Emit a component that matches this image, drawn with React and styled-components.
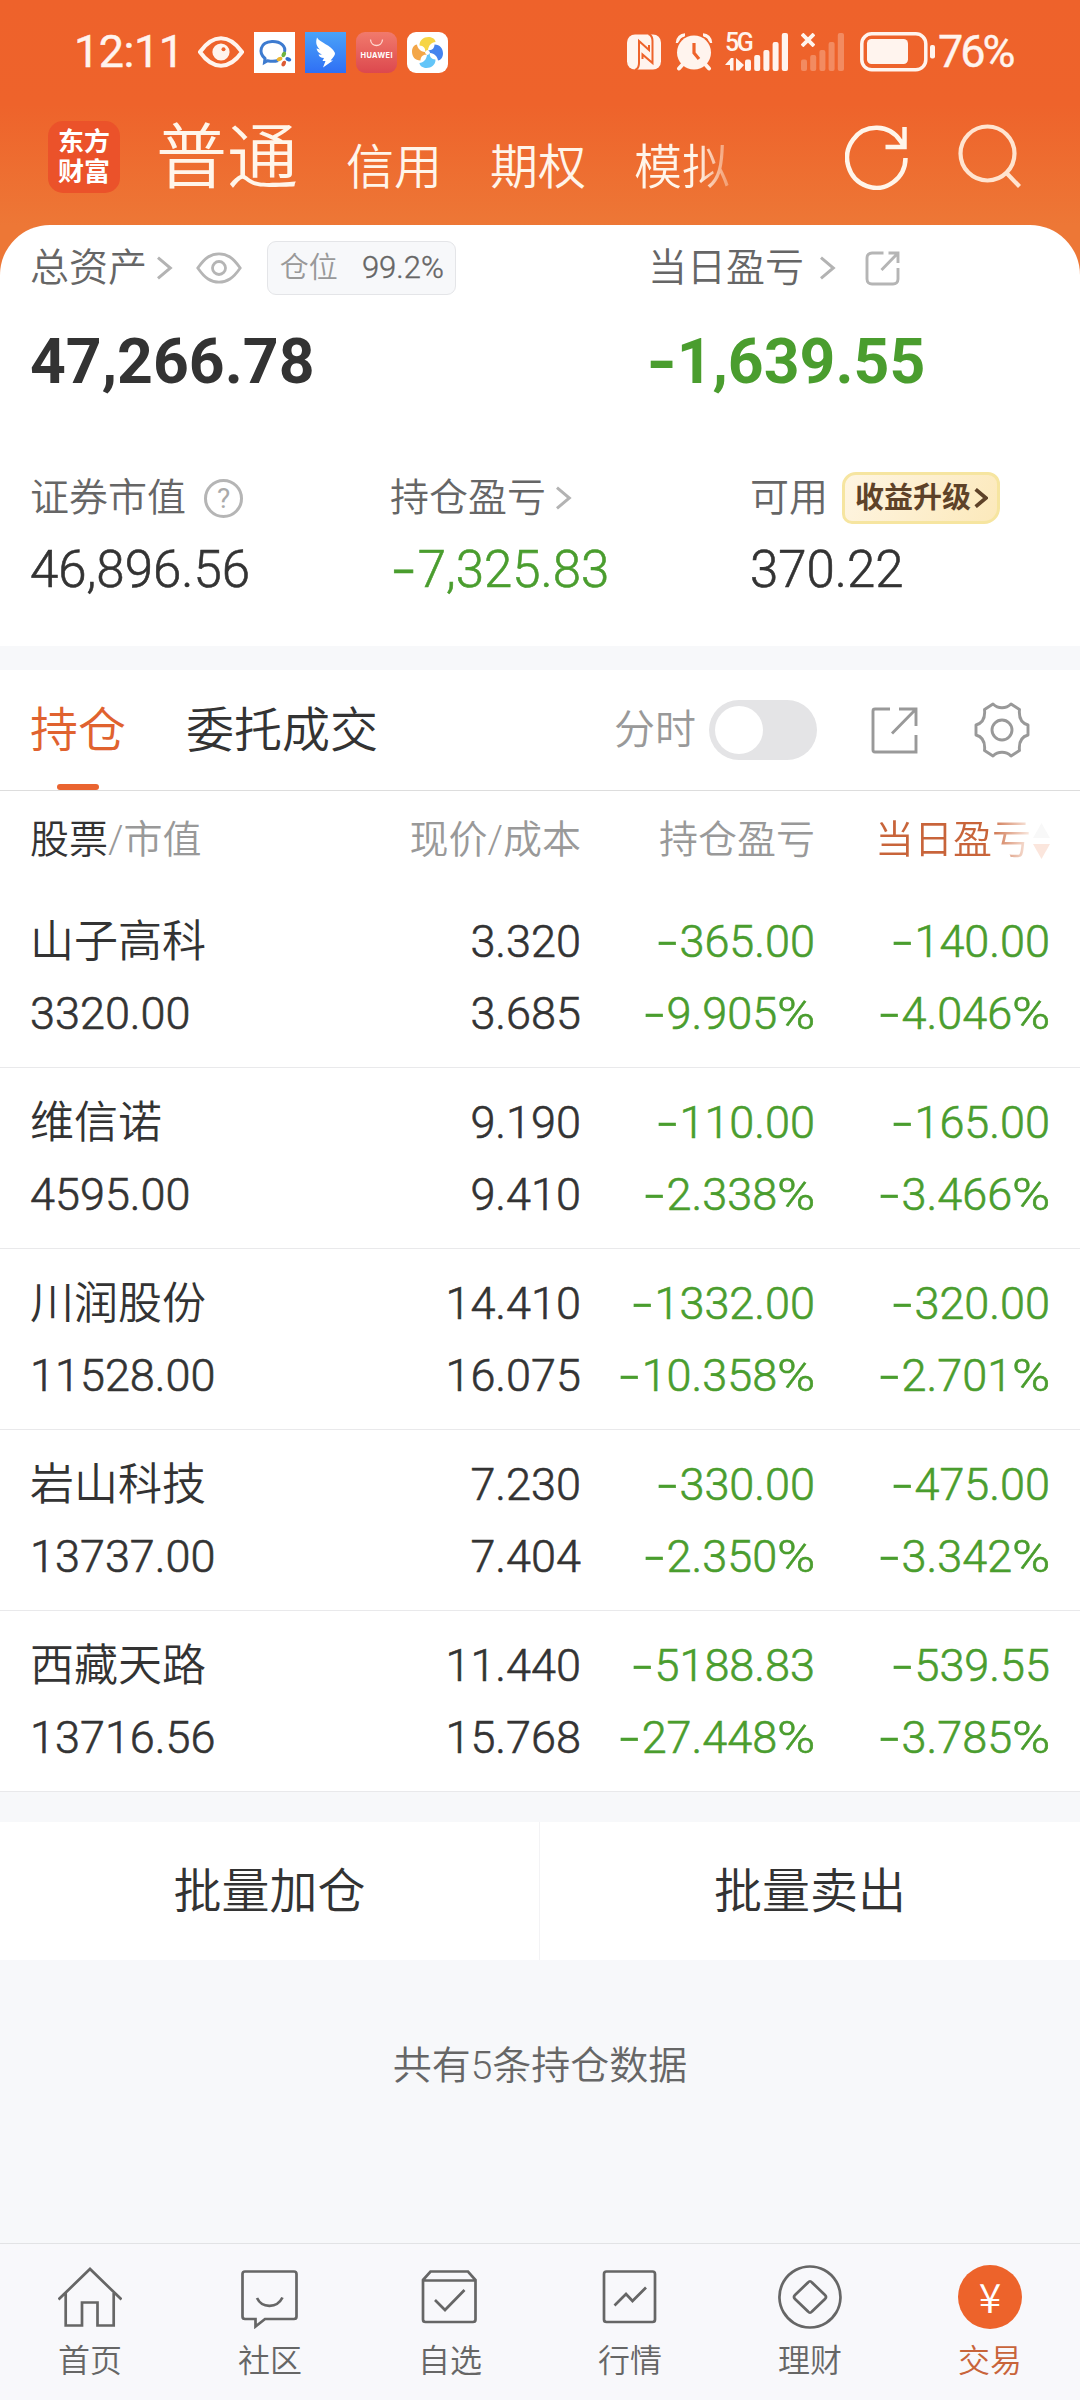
import React from 'react'
import styled, { createGlobalStyle } from 'styled-components'

const holdings = [
    { name: '山子高科', value: '3320.00', price: '3.320', cost: '3.685', profit: '-365.00', profitRate: '-9.905%', day: '-140.00', dayRate: '-4.046%' },
    { name: '维信诺', value: '4595.00', price: '9.190', cost: '9.410', profit: '-110.00', profitRate: '-2.338%', day: '-165.00', dayRate: '-3.466%' },
    { name: '川润股份', value: '11528.00', price: '14.410', cost: '16.075', profit: '-1332.00', profitRate: '-10.358%', day: '-320.00', dayRate: '-2.701%' },
    { name: '岩山科技', value: '13737.00', price: '7.230', cost: '7.404', profit: '-330.00', profitRate: '-2.350%', day: '-475.00', dayRate: '-3.342%' },
    { name: '西藏天路', value: '13716.56', price: '11.440', cost: '15.768', profit: '-5188.83', profitRate: '-27.448%', day: '-539.55', dayRate: '-3.785%' },
]

const GlobalStyle = createGlobalStyle`
    * {
        box-sizing: border-box;
    }
    body {
        margin: 0;
        background: #f7f8fa;
        color: #333;
        font-family: Roboto, 'Noto Sans CJK SC', sans-serif;
        font-weight: 350;
    }
    svg {
        display: block;
        flex: none;
    }
`

const Amount = ({ children, tight }) => {
    const percent = children.endsWith('%')
    const digits = children.replace('-', '').replace('%', '')
    return <><Sign $tight={tight}>-</Sign>{digits}{percent && <Unit>%</Unit>}</>
}

const Chevron = ({ color = '#b3b3b3', width = 3, size = 24 }) => (
    <svg width={size * 0.7} height={size} viewBox="0 0 17 24" fill="none" stroke={color} strokeWidth={width}>
        <path d="M2 1.5L14.5 12L2 22.5" />
    </svg>
)

const petal = 'M-8 -7C-8 -12.500 -4 -15.500 1 -15.500C5 -15.500 8 -13 8 -10.500C4 -10 1 -7 0.500 -2.500L-2.500 -0.500C-1.500 -4 -4 -7 -8 -7Z'

const StatusIcons = () => (
    <AppIcons>
        <svg width="46" height="32" viewBox="0 0 46 32" fill="none">
            <path d="M2 16C9 6 15 2.3 23 2.3S37 6 44 16C37 26 31 29.7 23 29.7S9 26 2 16Z" stroke="#fff4ee" strokeWidth="4" />
            <circle cx="23" cy="16" r="8.6" fill="#fff4ee" />
            <circle cx="25.5" cy="13.3" r="2" fill="#ee632b" />
        </svg>
        <svg width="41" height="41" viewBox="0 0 41 41">
            <rect width="41" height="41" fill="#fff" />
            <path d="M24 28.500C20 30 16 29.300 13.500 28.800L10.500 30.500L11 26.500C4.500 21 5.500 10 18 9.500C27 9.200 32 14.500 30.500 20" fill="none" stroke="#3d7bd0" strokeWidth="3" />
            <ellipse cx="30" cy="22.500" rx="2" ry="3" fill="#6eb43f" transform="rotate(25 30 22)" />
            <ellipse cx="34.500" cy="27.500" rx="3" ry="2" fill="#2f6fd0" transform="rotate(25 35 27)" />
            <ellipse cx="29.500" cy="31.500" rx="2" ry="3" fill="#dd5a35" transform="rotate(25 29.500 32)" />
            <ellipse cx="25.500" cy="27" rx="3" ry="2" fill="#edb52f" transform="rotate(-25 25.500 27)" />
        </svg>
        <svg width="41" height="41" viewBox="0 0 41 41">
            <defs>
                <linearGradient id="ding" x1="0" y1="0" x2="0" y2="1">
                    <stop offset="0" stopColor="#4aa3f8" />
                    <stop offset="1" stopColor="#2f6ff5" />
                </linearGradient>
            </defs>
            <rect width="41" height="41" fill="url(#ding)" />
            <path d="M12 5.500C15 11 26 12.500 30 21C30.300 23 28 26 25.500 28.500H28L18 35.500L20.500 29H17.500L19 26C16 26 14 24.500 13.500 22.500L17 22.700C13.500 21 12 19 11.500 16.500L15 17.500C11 14 10.500 10 12 5.500Z" fill="#fff" />
        </svg>
        <svg width="41" height="41" viewBox="0 0 41 41">
            <defs>
                <linearGradient id="hw" x1="0" y1="0" x2="0" y2="1">
                    <stop offset="0" stopColor="#f17a6c" />
                    <stop offset="1" stopColor="#dc484e" />
                </linearGradient>
            </defs>
            <rect width="41" height="41" rx="9" fill="url(#hw)" />
            <path d="M14.500 7.500C15 15.500 26 15.500 26.500 7.500" fill="none" stroke="#ffd8d0" strokeWidth="1.300" />
            <text x="20.500" y="26" textAnchor="middle" textLength="32" fontFamily="Inter, sans-serif" fontWeight="700" fontSize="7.400" fill="#fff">HUAWEI</text>
        </svg>
        <svg width="41" height="41" viewBox="0 0 41 41">
            <rect width="41" height="41" rx="9" fill="#fff" />
            <g transform="translate(20.500 20.500)">
                <path d={petal} fill="#f3a648" transform="rotate(270)" />
                <path d={petal} fill="#63c5f8" transform="rotate(180)" />
                <path d={petal} fill="#4583ee" transform="rotate(90)" />
                <path d={petal} fill="#f6d545" />
                <circle r="2.200" fill="#fff" />
            </g>
        </svg>
    </AppIcons>
)

const NfcIcon = () => (
    <svg width="34" height="36" viewBox="0 0 34 36">
        <rect width="34" height="35" y="0.500" rx="8" fill="#fff4ee" />
        <path d="M8 36Q12 34.500 12 29V7L22 16V11" fill="none" stroke="#ee632b" strokeWidth="2" />
        <path d="M21.500 0Q25.500 1.500 25.500 7V29L15.500 20.500V25" fill="none" stroke="#ee632b" strokeWidth="2" />
    </svg>
)

const AlarmIcon = () => (
    <svg width="38" height="38" viewBox="0 0 38 38">
        <path d="M2.500 10C2.500 5 6 2 10 2M35.500 10C35.500 5 32 2 28 2" fill="none" stroke="#fff4ee" strokeWidth="3.500" />
        <circle cx="19" cy="19.500" r="18.700" fill="#ee632b" />
        <path d="M8 31L4 35.500M30 31L34 35.500" stroke="#fff4ee" strokeWidth="4" strokeLinecap="round" />
        <circle cx="19" cy="19.500" r="17" fill="#fff4ee" />
        <path d="M19 10V20L24 26" fill="none" stroke="#ee632b" strokeWidth="3.200" />
    </svg>
)

const Bars = ({ fade }) => (
    <svg width="44" height="38" viewBox="0 0 44 38" fill="#fff4ee" opacity={fade ? 0.28 : 1}>
        <rect x="0" y="26.500" width="6" height="11.500" rx="2" />
        <rect x="9.200" y="22" width="6" height="16" rx="2" />
        <rect x="18.400" y="17" width="6" height="21" rx="2" />
        <rect x="27.600" y="9" width="6" height="29" rx="2" />
        <rect x="36.800" y="0" width="6.200" height="38" rx="2" />
    </svg>
)

const Battery = () => (
    <svg width="76" height="40" viewBox="0 0 76 40">
        <rect x="1.800" y="1.800" width="64" height="36" rx="10" fill="none" stroke="#fff4ee" strokeWidth="3.500" />
        <rect x="7" y="7" width="41" height="25" rx="4.500" fill="#fff4ee" />
        <rect x="70" y="13" width="5" height="13.500" rx="2" fill="#fff4ee" />
    </svg>
)

const ShareIcon = ({ round }) => (
    <svg width={round ? 35 : 47} height={round ? 35 : 47} viewBox={round ? '0 0 35 35' : '0 0 47 47'} fill="none" stroke={round ? '#b5b5b5' : '#999'} strokeWidth="2.900">
        {round
            ? <path d="M18.500 2H7C4 2 2 4 2 7V28C2 31 4 33 7 33H28C31 33 33 31 33 28V17M23.500 2H33V12M33 2L16.500 19" />
            : <path d="M19 2H4Q2 2 2 4V43Q2 45 4 45H45V28M28 2H45V19M45 2L21 26.500" />}
    </svg>
)

const GearIcon = () => (
    <svg width="58" height="58" viewBox="-29 -29 58 58" fill="none" stroke="#999" strokeWidth="2.900" strokeLinejoin="round">
        <path d="M9 -26L17.500 -20.500C16.500 -11 20.500 -6.500 26 -5V5C20.500 6.500 16.500 11 17.500 20.500L9 26C4 21 -4 21 -9 26L-17.500 20.500C-16.500 11 -20.500 6.500 -26 5V-5C-20.500 -6.500 -16.500 -11 -17.500 -20.500L-9 -26C-4 -21 4 -21 9 -26Z" />
        <circle r="10" />
    </svg>
)

const navIcons = {
    home: <path d="M0.500 34.500L32 4L63.500 34.500M7.700 28V60.500H24V37.500H39.500V60.500H55.700V28" />,
    chat: <path d="M7 6.500H56Q58.500 6.500 58.500 9V51.500Q58.500 54 56 54H27L17.500 61.500V54H7Q4.500 54 4.500 51.500V9Q4.500 6.500 7 6.500ZM19 33C24 43.500 39 43.500 44.500 32.500" />,
    pick: <path d="M5 15L12.500 6.500H50L57.500 15V54.500Q57.500 57 55 57H7.500Q5 57 5 54.500ZM5 15.500H57.500M17 35L27 45L46.500 25" />,
    market: <path d="M8.500 6.500H54.500Q57 6.500 57 9V54.500Q57 57 54.500 57H8.500Q6 57 6 54.500V9Q6 6.500 8.500 6.500ZM16.500 40.500L28 29L34.500 36L48 22.500" />,
    wealth: <path d="M32 1.500A30.500 30.500 0 1 1 31.900 1.500ZM30 17.500Q32 15 34 17.500L47 30Q49 32 47 34L34 46.500Q32 49 30 46.500L17 34Q15 32 17 30Z" />,
}

const navItems = [
    { icon: 'home', label: '首页' },
    { icon: 'chat', label: '社区' },
    { icon: 'pick', label: '自选' },
    { icon: 'market', label: '行情' },
    { icon: 'wealth', label: '理财' },
    { icon: 'trade', label: '交易', active: true },
]

const App = () => {
    return (
        <Page>
            <GlobalStyle />
            <Hero>
                <StatusBar>
                    <Clock>12:11</Clock>
                    <StatusIcons />
                    <SystemIcons>
                        <NfcIcon />
                        <Gap $w={14} />
                        <AlarmIcon />
                        <Network>
                            <NetType>
                                <span>5G</span>
                                <svg width="19" height="13" viewBox="0 0 19 13" fill="#fff4ee">
                                    <path d="M0 7L6 0H8.500V12.500H5V7ZM11 0L19 7L14 12.500H11Z" />
                                </svg>
                            </NetType>
                            <Bars />
                        </Network>
                        <NoSim>
                            <svg width="14" height="14" viewBox="0 0 14 14" stroke="#fff4ee" strokeWidth="3.800">
                                <path d="M1 1L13 13M13 1L1 13" />
                            </svg>
                            <Bars fade />
                        </NoSim>
                        <Battery />
                        <Percent>76%</Percent>
                    </SystemIcons>
                </StatusBar>
                <TopBar>
                    <Logo>东方<br />财富</Logo>
                    <Accounts>
                        <Account $big>普通</Account>
                        <Account>信用</Account>
                        <Account>期权</Account>
                        <Account $fade>模拟</Account>
                    </Accounts>
                    <Actions>
                        <svg width="64" height="66" viewBox="0 0 64 66" fill="none" stroke="#fff5ea" strokeWidth="4.500">
                            <path d="M60.500 34A29.200 30 0 1 1 55.500 17L59 22M59.500 3V23H40.500" />
                        </svg>
                        <svg width="64" height="66" viewBox="0 0 64 66" fill="none" stroke="#ffe4d0" strokeWidth="4.200">
                            <circle cx="29.500" cy="29.500" r="27" />
                            <path d="M48.500 49L61.500 62.500" />
                        </svg>
                    </Actions>
                </TopBar>
            </Hero>

            <Summary>
                <Totals>
                    <div>
                        <Label>
                            总资产<Gap $w={9} /><Chevron /><Gap $w={23} />
                            <svg width="46" height="32" viewBox="0 0 46 32" fill="none" stroke="#b5b5b5" strokeWidth="2.800">
                                <path d="M1.800 16C9 5.500 15 1.800 23 1.800S37 5.500 44.200 16C37 26.500 31 30.200 23 30.200S9 26.500 1.800 16Z" />
                                <circle cx="23" cy="16" r="6.500" />
                            </svg>
                            <Position>
                                仓位<b>99.2%</b>
                            </Position>
                        </Label>
                        <Big>47,266.78</Big>
                    </div>
                    <div>
                        <Label>
                            当日盈亏<Gap $w={15} /><Chevron /><Gap $w={29} /><ShareIcon round />
                        </Label>
                        <Big $green><Amount tight>-1,639.55</Amount></Big>
                    </div>
                </Totals>
                <Details>
                    <div>
                        <Label>
                            证券市值<Help>?</Help>
                        </Label>
                        <Value>46,896.56</Value>
                    </div>
                    <div>
                        <Label>
                            持仓盈亏<Gap $w={9} /><Chevron />
                        </Label>
                        <Value $green><Amount>-7,325.83</Amount></Value>
                    </div>
                    <div>
                        <Label>
                            可用
                            <Upgrade>收益升级<Chevron color="#5e4228" width={4.5} size={20} /></Upgrade>
                        </Label>
                        <Value>370.22</Value>
                    </div>
                </Details>
            </Summary>

            <Tabs>
                <Tab $active>持仓</Tab>
                <Tab>委托成交</Tab>
                <Tools>
                    <span>分时</span>
                    <Toggle />
                    <ShareIcon />
                    <GearIcon />
                </Tools>
            </Tabs>

            <Head>
                <div><b>股票</b>/市值</div>
                <div>现价/成本</div>
                <div>持仓盈亏</div>
                <SortHead>
                    <span>当日盈亏</span>
                    <svg width="17" height="36" viewBox="0 0 17 36">
                        <path d="M8.500 0L17 15H0Z" fill="#f8f8f8" />
                        <path d="M0 21H17L8.500 36Z" fill="#fbe6dd" />
                    </svg>
                </SortHead>
            </Head>
            {holdings.map((item) => (
                <Row key={item.name}>
                    <Cell $left>
                        <Name>{item.name}</Name>
                        <span>{item.value}</span>
                    </Cell>
                    <Cell>
                        <span>{item.price}</span>
                        <span>{item.cost}</span>
                    </Cell>
                    <Cell $green>
                        <span><Amount>{item.profit}</Amount></span>
                        <span><Amount>{item.profitRate}</Amount></span>
                    </Cell>
                    <Cell $green>
                        <span><Amount>{item.day}</Amount></span>
                        <span><Amount>{item.dayRate}</Amount></span>
                    </Cell>
                </Row>
            ))}

            <Batch>
                <BatchButton>批量加仓</BatchButton>
                <BatchButton>批量卖出</BatchButton>
            </Batch>
            <Count>共有5条持仓数据</Count>

            <Nav>
                {navItems.map((item) => (
                    <NavItem key={item.label} $active={item.active}>
                        {item.active
                            ? <Yen>¥</Yen>
                            : (
                                <svg width="64" height="64" viewBox="0 0 64 64" fill="none" stroke="#666" strokeWidth="2.700">
                                    {navIcons[item.icon]}
                                </svg>
                            )}
                        <span>{item.label}</span>
                    </NavItem>
                ))}
            </Nav>
        </Page>
    )
}

export default App

const Page = styled.div`
    width: 1080px;
    height: 2400px;
    display: flex;
    flex-direction: column;
    overflow: hidden;
`

const Hero = styled.header`
    height: 275px;
    background: linear-gradient(#ee622b 0, #ee632b 105px, #ed7736 225px);
`

const StatusBar = styled.div`
    height: 104px;
    padding: 0 66px 0 74px;
    display: flex;
    align-items: center;
    color: #fff4ee;
`

const Clock = styled.span`
    width: 124px;
    font-size: 45px;
    font-weight: 400;
    line-height: 60px;
    letter-spacing: -0.5px;
    -webkit-text-stroke: 0.4px;
`

const AppIcons = styled.div`
    display: flex;
    align-items: center;
    gap: 10px;
`

const SystemIcons = styled.div`
    margin-left: auto;
    display: flex;
    align-items: center;
`

const Network = styled.div`
    display: flex;
    margin: 0 12px;
`

const NetType = styled.div`
    width: 20px;
    display: flex;
    flex-direction: column;
    justify-content: space-between;
    white-space: nowrap;

    span {
        font-size: 25px;
        font-weight: 500;
        line-height: 20px;
        letter-spacing: -2.5px;
    }
`

const NoSim = styled.div`
    display: flex;
    margin-right: 15px;

    svg:first-child {
        margin-right: -14px;
    }
`

const Percent = styled.span`
    width: 76px;
    margin-left: 2px;
    font-size: 45px;
    font-weight: 400;
    line-height: 60px;
    letter-spacing: -3px;
    white-space: nowrap;
    -webkit-text-stroke: 0.4px;
`

const TopBar = styled.div`
    height: 106px;
    padding: 0 58px 0 48px;
    display: flex;
    align-items: center;
`

const Logo = styled.div`
    width: 72px;
    height: 72px;
    padding-top: 6px;
    border-radius: 15px;
    background: #eb522a;
    color: #fff;
    font-size: 26px;
    font-weight: 700;
    line-height: 30px;
    text-align: center;
`

const Accounts = styled.nav`
    margin-left: 36px;
    padding-top: 11px;
    display: flex;
    align-items: flex-start;
    gap: 48px;
    color: #fff5ea;
`

const Account = styled.span`
    padding-top: ${(p) => (p.$big ? '0' : '10px')};
    font-size: ${(p) => (p.$big ? '71px' : '48px')};
    line-height: 90px;
    ${(p) => p.$fade && `
        background: linear-gradient(90deg, #fff5ea 65%, rgba(255, 245, 234, 0.35) 98%);
        background-clip: text;
        color: transparent;
    `}
`

const Actions = styled.div`
    margin-left: auto;
    display: flex;
    gap: 49px;
`

const Summary = styled.section`
    height: 421px;
    margin-top: -50px;
    padding: 16px 30px 0;
    border-radius: 50px 50px 0 0;
    background: #fff;
    flex: none;
`

const Totals = styled.div`
    display: grid;
    grid-template-columns: 618px 1fr;
`

const Details = styled.div`
    margin-top: 73px;
    display: grid;
    grid-template-columns: 360px 360px 1fr;
`

const Label = styled.div`
    height: 54px;
    display: flex;
    align-items: center;
    color: #666;
    font-size: 39px;
    line-height: 56px;
    white-space: nowrap;
`

const Gap = styled.i`
    width: ${(p) => p.$w}px;
`

const Position = styled.div`
    width: 189px;
    height: 54px;
    margin-left: 25px;
    padding: 0 11px 0 12px;
    display: flex;
    align-items: center;
    justify-content: space-between;
    border: 1px solid #e4e5e8;
    border-radius: 9px;
    background: #f7f8fa;
    color: #999;
    font-size: 29px;

    b {
        color: #666;
        font-weight: 300;
        font-size: 31px;
        -webkit-text-stroke: 0.4px;
    }
`

const Big = styled.div`
    margin-top: 31px;
    color: ${(p) => (p.$green ? '#4a9d2e' : '#333')};
    font-size: 62.5px;
    font-weight: 700;
    line-height: 72px;
`

const Value = styled.div`
    margin-top: 15px;
    height: 60px;
    color: ${(p) => (p.$green ? '#4a9d2e' : '#333')};
    font-size: 51px;
    line-height: 60px;
    -webkit-text-stroke: 0.6px;
`

const Sign = styled.span`
    display: inline-block;
    margin: ${(p) => (p.$tight ? '0 0 0 -0.01em' : '0 0.05em 0 0.04em')};
    font-family: Inter, sans-serif;
    line-height: 1;
    transform: scaleX(${(p) => (p.$tight ? 1.05 : 1.2)});
`

const Unit = styled.span`
    display: inline-block;
    margin-right: 0.1em;
    line-height: 1;
    transform: scaleX(1.15);
    transform-origin: left;
`

const Help = styled.span`
    width: 39px;
    height: 39px;
    margin-left: 18px;
    border: 3px solid #b5b5b5;
    border-radius: 50%;
    color: #aaa;
    font-size: 28px;
    font-weight: 400;
    line-height: 34px;
    text-align: center;
`

const Upgrade = styled.span`
    width: 158px;
    height: 52px;
    margin-left: 14px;
    padding-left: 10px;
    display: flex;
    align-items: center;
    gap: 3px;
    border: 3px solid #f6e5a0;
    border-radius: 14px 12px 16px 10px;
    background: linear-gradient(120deg, #fef5e2, #fce9bb);
    color: #5e4228;
    font-size: 29px;
    font-weight: 700;
`

const Tabs = styled.div`
    height: 121px;
    margin-top: 24px;
    padding: 0 49px 0 30px;
    display: flex;
    border-bottom: 1px solid #ddd;
    background: #fff;
    flex: none;
`

const Tab = styled.div`
    height: 120px;
    margin-right: 60px;
    display: flex;
    flex-direction: column;
    align-items: center;
    color: ${(p) => (p.$active ? '#e0622f' : '#333')};
    font-size: 48px;
    line-height: 122px;

    &::after {
        content: '';
        width: 42px;
        height: 6px;
        margin-top: -8px;
        border-radius: 3px;
        background: ${(p) => (p.$active ? '#ea6430' : 'transparent')};
    }
`

const Tools = styled.div`
    margin-left: auto;
    display: flex;
    align-items: center;
    color: #999;
    font-size: 41px;

    span {
        line-height: 60px;
    }
    svg {
        margin-left: 54px;
    }
    svg + svg {
        margin-left: 55px;
    }
`

const Toggle = styled.i`
    width: 108px;
    height: 60px;
    margin-left: 13px;
    padding: 6px;
    border-radius: 30px;
    background: #e4e4e6;

    &::before {
        content: '';
        display: block;
        width: 48px;
        height: 48px;
        border-radius: 50%;
        background: #fff;
    }
`

const Head = styled.div`
    height: 96px;
    padding: 0 30px;
    display: grid;
    grid-template-columns: 260px 291px 234px 235px;
    background: #fff;
    color: #999;
    font-size: 39px;
    line-height: 99px;
    text-align: right;
    flex: none;

    div:first-child {
        text-align: left;
    }
    b {
        color: #333;
        font-weight: 350;
    }
`

const SortHead = styled.div`
    display: flex;
    align-items: center;
    justify-content: flex-end;
    gap: 2px;

    span {
        background: linear-gradient(90deg, #c8643a 72%, #f8e4da 98%);
        background-clip: text;
        color: transparent;
    }
`

const Row = styled.div`
    height: 181px;
    padding: 19px 30px 0;
    display: grid;
    grid-template-columns: 260px 291px 234px 235px;
    border-bottom: 1px solid #e9e9eb;
    background: #fff;
    flex: none;
`

const Cell = styled.div`
    display: flex;
    flex-direction: column;
    align-items: ${(p) => (p.$left ? 'flex-start' : 'flex-end')};
    color: ${(p) => (p.$green ? '#4a9d2e' : '#333')};
    font-size: 45px;
    line-height: 72px;
    white-space: nowrap;
    -webkit-text-stroke: 0.6px;
`

const Name = styled.span`
    font-size: 44px;
    -webkit-text-stroke: 0;
`

const Batch = styled.div`
    height: 138px;
    margin-top: 30px;
    display: flex;
    background: #fff;
    flex: none;
`

const BatchButton = styled.div`
    width: 539px;
    color: #333;
    font-size: 48px;
    line-height: 140px;
    text-align: center;

    & + & {
        width: 541px;
        border-left: 1px solid #f3f3f5;
    }
`

const Count = styled.div`
    height: 283px;
    padding-top: 76px;
    color: #666;
    font-size: 39px;
    line-height: 60px;
    text-align: center;
`

const Nav = styled.nav`
    height: 157px;
    display: flex;
    border-top: 1px solid #e2e3e5;
    background: #f8f8fb;
    flex: none;
`

const NavItem = styled.div`
    flex: 1;
    padding-top: 21px;
    display: flex;
    flex-direction: column;
    align-items: center;
    color: ${(p) => (p.$active ? '#c8643a' : '#666')};
    font-size: 32px;
    line-height: 44px;

    span {
        margin-top: 10px;
    }
`

const Yen = styled.div`
    width: 64px;
    height: 64px;
    border-radius: 50%;
    background: #ed632b;
    color: #fff;
    font-size: 41px;
    font-family: 'Noto Sans CJK SC', sans-serif;
    line-height: 60px;
    text-align: center;
`
